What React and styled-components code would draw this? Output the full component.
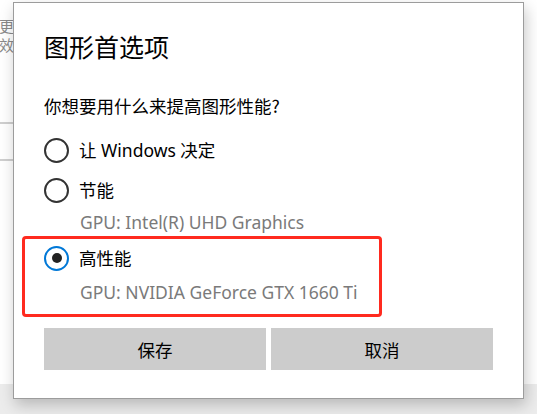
import React from "react";
import styled, { createGlobalStyle } from "styled-components";

const GlobalStyle = createGlobalStyle`
  html, body {
    margin: 0;
    padding: 0;
    width: 537px;
    height: 414px;
    overflow: hidden;
    background: #ececec;
    font-family: "Segoe UI", "Noto Sans", "Noto Sans CJK SC", sans-serif;
  }
`;

const options = [
  { label: "让 Windows 决定" },
  { label: "节能", gpu: "GPU: Intel(R) UHD Graphics" },
];

const App = () => {
  return (
    <>
      <GlobalStyle />
      <Desktop>
        <BehindWindow>
          <BehindText>更</BehindText>
          <BehindText>效</BehindText>
          <BehindRule $top={68} />
          <BehindRule $top={35} />
        </BehindWindow>

        <Dialog>
          <Title>图形首选项</Title>
          <Question>你想要用什么来提高图形性能?</Question>

          {options.map((o) => (
            <React.Fragment key={o.label}>
              <RadioRow>
                <Radio />
                <RadioLabel>{o.label}</RadioLabel>
              </RadioRow>
              {o.gpu && <GpuText>{o.gpu}</GpuText>}
            </React.Fragment>
          ))}

          <Highlight>
            <RadioRow $tight>
              <Radio $checked />
              <RadioLabel>高性能</RadioLabel>
            </RadioRow>
            <GpuText $gap>GPU: NVIDIA GeForce GTX 1660 Ti</GpuText>
          </Highlight>

          <ButtonBar>
            <Button>保存</Button>
            <Button>取消</Button>
          </ButtonBar>
        </Dialog>
      </Desktop>
    </>
  );
};

export default App;

const Desktop = styled.div`
  position: relative;
  width: 537px;
  height: 414px;
`;

const BehindWindow = styled.div`
  width: 537px;
  height: 384px;
  background: #ffffff;
  padding-top: 16px;
  box-sizing: border-box;
  display: flex;
  flex-direction: column;
`;

const BehindText = styled.div`
  font-family: "Noto Sans CJK SC", sans-serif;
  font-size: 15px;
  line-height: 19px;
  color: #8a8a8a;
  margin-left: -1px;
`;

const BehindRule = styled.div`
  height: 2px;
  width: 20px;
  background: #cfcfcf;
  margin-top: ${(p) => p.$top}px;
`;

const Dialog = styled.div`
  position: absolute;
  left: 13px;
  top: 2px;
  width: 511px;
  height: 397px;
  box-sizing: border-box;
  background: #ffffff;
  border: 1px solid #9c9c9c;
  box-shadow: 2px 6px 14px rgba(0, 0, 0, 0.22);
  padding: 0 30px;
  display: flex;
  flex-direction: column;
`;

const Title = styled.div`
  font-family: "Noto Sans CJK SC", sans-serif;
  font-size: 25px;
  line-height: 34px;
  color: #000;
  margin-top: 26px;
`;

const Question = styled.div`
  font-family: "Noto Sans CJK SC", sans-serif;
  font-size: 17.5px;
  line-height: 24px;
  color: #000;
  margin-top: 31px;
  margin-bottom: 12px;
`;

const RadioRow = styled.div`
  display: flex;
  align-items: center;
  height: ${(p) => (p.$tight ? 38 : 40)}px;
  gap: 10px;
`;

const Radio = styled.span`
  position: relative;
  width: 25px;
  height: 25px;
  box-sizing: border-box;
  border-radius: 50%;
  border: 2.5px solid ${(p) => (p.$checked ? "#0078d7" : "#333333")};
  flex-shrink: 0;

  &::after {
    content: "";
    display: ${(p) => (p.$checked ? "block" : "none")};
    position: absolute;
    left: 50%;
    top: 50%;
    width: 10px;
    height: 10px;
    margin: -5px 0 0 -5px;
    border-radius: 50%;
    background: #222222;
  }
`;

const RadioLabel = styled.span`
  font-size: 17.5px;
  line-height: 24px;
  color: #000;
`;

const GpuText = styled.div`
  font-size: 17.5px;
  line-height: 24px;
  color: #7a7a7a;
  padding-left: 36px;
  margin-top: ${(p) => (p.$gap ? 3 : 0)}px;
`;

const Highlight = styled.div`
  width: 360px;
  box-sizing: border-box;
  margin: 2px 0 0 -22px;
  padding: 0 0 10px 19px;
  border: 3px solid #ff2a1f;
  border-radius: 4px;
`;

const ButtonBar = styled.div`
  display: grid;
  grid-template-columns: 1fr 1fr;
  gap: 5px;
  margin-top: 11px;
`;

const Button = styled.div`
  height: 42px;
  background: #cccccc;
  display: flex;
  align-items: center;
  justify-content: center;
  font-family: "Noto Sans CJK SC", sans-serif;
  font-size: 17.5px;
  color: #000;
`;
